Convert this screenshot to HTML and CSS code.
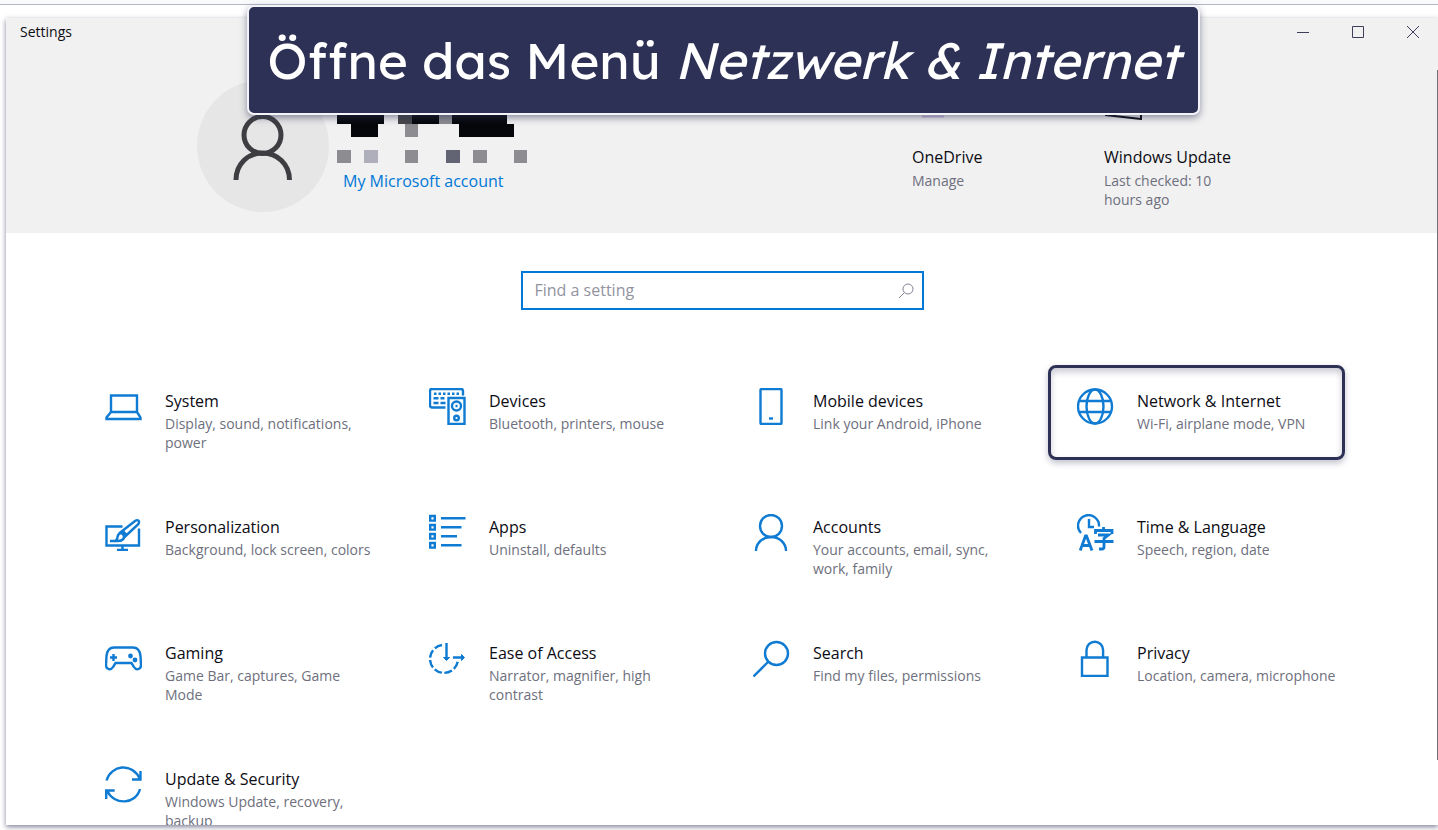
FILE: index.html
```html
<!DOCTYPE html>
<html lang="en">
<head>
<meta charset="utf-8">
<title>Settings</title>
<link rel="stylesheet" href="styles.css">
</head>
<body>
<div class="page">
  <h1 class="banner" lang="de">Öffne das Menü <em>Netzwerk &amp; Internet</em></h1>
  <main class="window">
    <header class="header">
      <div class="titlebar">
        <span class="app-name">Settings</span>
        <div class="controls">
          <button class="control" aria-label="Minimize"><svg width="14" height="14" viewBox="0 0 14 14"><path d="M1 7.500h12"/></svg></button>
          <button class="control" aria-label="Maximize"><svg width="14" height="14" viewBox="0 0 14 14"><path d="M1.500 1.500h11v11h-11z"/></svg></button>
          <button class="control" aria-label="Close"><svg width="14" height="14" viewBox="0 0 14 14"><path d="M1 1l12 12M13 1L1 13"/></svg></button>
        </div>
      </div>
      <div class="profile">
        <div class="avatar">
          <svg width="60" height="70" viewBox="0 0 60 70"><circle cx="29.500" cy="24" r="18.500"/><path d="M3 69C3 53 15 42 29.500 42s27 11 27 27"/></svg>
        </div>
        <div class="account">
          <svg class="masked-name" width="192" height="52" viewBox="0 0 192 52">
            <path fill="#06070b" d="M0 0h47v12h-6v13H14V12H0zM75 0h27v12H75zM115 0h55v12h7v13h-55V12h-7z"/>
            <path fill="#46464a" d="M61 0h14v12H61z"/>
            <path fill="#8c8c91" d="M102 0h13v12h-13zM68 12h13v13H68zM0 38h14v13H0zM68 38h13v13H68zM136 38h14v13h-14zM177 38h13v13h-13z"/>
            <path fill="#afafbb" d="M27 38h14v13H27z"/>
            <path fill="#626474" d="M109 38h14v13h-14z"/>
          </svg>
          <a class="account-link" href="#">My Microsoft account</a>
        </div>
        <div class="services">
          <div class="service">
            <svg width="40" height="36" viewBox="0 0 40 36"><path stroke="#c5bddb" stroke-width="2" d="M10 32.500h22"/></svg>
            <a class="service-name" href="#">OneDrive</a>
            <span class="service-note">Manage</span>
          </div>
          <div class="service">
            <svg width="40" height="36" viewBox="0 0 40 36"><path fill="none" stroke="#0b0b0f" stroke-width="2" d="M2 3v28l35 4V3z"/></svg>
            <a class="service-name" href="#">Windows Update</a>
            <span class="service-note">Last checked: 10 hours ago</span>
          </div>
        </div>
      </div>
    </header>

    <label class="search">
      <input class="search-input" type="text" placeholder="Find a setting" aria-label="Find a setting">
      <svg class="search-icon" width="16" height="16" viewBox="0 0 16 16"><circle cx="10" cy="6" r="5"/><path d="M6.500 9.500L1 15"/></svg>
    </label>

    <section class="tiles">
      <button class="tile">
        <svg class="icon" viewBox="0 0 37 37"><path d="M6 7.500h26v16.500H6zM6 24L1.500 29.500v1.500h34V29.500L32 24"/></svg>
        <span class="text"><span class="name">System</span><span class="note">Display, sound, notifications, power</span></span>
      </button>
      <button class="tile">
        <svg class="icon" viewBox="0 0 37 37"><path d="M16.500 19.500H3a2 2 0 0 1-2-2V3a2 2 0 0 1 2-2h29a2 2 0 0 1 2 2v4.500M19.500 10h16v26h-16z"/><circle cx="27.500" cy="18" r="4.500"/><circle cx="27.500" cy="30" r="2.300"/><path d="M5 5.700h26" stroke-dasharray="2.500 2"/><path d="M4.500 10.200h5m2 0h4M4.500 15h5m2 0h5M26.500 18h2"/></svg>
        <span class="text"><span class="name">Devices</span><span class="note">Bluetooth, printers, mouse</span></span>
      </button>
      <button class="tile">
        <svg class="icon" viewBox="0 0 37 37"><rect x="7.500" y="1" width="21" height="35" rx="1"/><path d="M16 30.500h4"/></svg>
        <span class="text"><span class="name">Mobile devices</span><span class="note">Link your Android, iPhone</span></span>
      </button>
      <button class="tile tile-marked">
        <svg class="icon" viewBox="0 0 37 37"><circle cx="18" cy="18.500" r="17"/><ellipse cx="18" cy="18.500" rx="8.500" ry="17"/><path d="M2.500 13h31M2.500 24h31"/></svg>
        <span class="text"><span class="name">Network &amp; Internet</span><span class="note">Wi-Fi, airplane mode, VPN</span></span>
      </button>
      <button class="tile">
        <svg class="icon" viewBox="0 0 37 37"><path d="M17.500 12.500H1.500v19h32.500V14.500M17.500 32v4M12 36h11"/><path d="M5 27h8c5 0 7-3 5.500-6s-5.500-2-6 2c0 2-1.500 4-3 4M14 19.500L30 7c3-2 5 0 3.500 3L19 23.500M17.500 16.500l4 4.500"/></svg>
        <span class="text"><span class="name">Personalization</span><span class="note">Background, lock screen, colors</span></span>
      </button>
      <button class="tile">
        <svg class="icon" viewBox="0 0 37 37"><path d="M1.200 2h4.600v4.600H1.200zM1.200 11h4.600v4.600H1.200zM1.200 20h4.600v4.600H1.200zM1.200 29h4.600v4.600H1.200zM12 4.300h24.500M12 13.300h20.500M12 22.300h16M12 31.300h20.500"/></svg>
        <span class="text"><span class="name">Apps</span><span class="note">Uninstall, defaults</span></span>
      </button>
      <button class="tile">
        <svg class="icon" viewBox="0 0 37 37"><circle cx="18" cy="12" r="11"/><path d="M3 37c0-8 6.500-14 15-14s15 6 15 14"/></svg>
        <span class="text"><span class="name">Accounts</span><span class="note">Your accounts, email, sync, work, family</span></span>
      </button>
      <button class="tile">
        <svg class="icon" viewBox="0 0 37 37"><path d="M4 19A10.500 10.500 0 1 1 22 12.500M12 5v8h5"/><path stroke-width="2.800" d="M3.200 36.500L8.500 22h1L15 36.500M5.200 31.500h8M26.500 13v3.500M18.500 20v-3.500h16.500V20M21 21h10.500l-4.500 3.500V33q0 2-2 2h-3M17.500 27.500h19"/></svg>
        <span class="text"><span class="name">Time &amp; Language</span><span class="note">Speech, region, date</span></span>
      </button>
      <button class="tile">
        <svg class="icon" viewBox="0 0 37 37"><path d="M9 7.500h19c5 0 7 4 7.500 8.500l.5 9c0 5-5 5.500-7 2l-2.500-4h-16L8 27c-2 3.500-7 3-7-2l.500-9C2 11.500 4 7.500 9 7.500zM8.500 14v7M5 17.500h7"/><circle class="solid" cx="25.500" cy="16" r="1.200"/><circle class="solid" cx="30" cy="20" r="1.200"/></svg>
        <span class="text"><span class="name">Gaming</span><span class="note">Game Bar, captures, Game Mode</span></span>
      </button>
      <button class="tile">
        <svg class="icon" viewBox="0 0 37 37"><path d="M13 5A14 14 0 1 0 29 20" stroke-dasharray="8 2.500"/><path d="M17.500 3v15M24 17.500h10"/><path class="solid" d="M14.500 17.500L17.500 20.500l3-3zM32.500 14.500l3 3-3 3z" stroke-width="1"/></svg>
        <span class="text"><span class="name">Ease of Access</span><span class="note">Narrator, magnifier, high contrast</span></span>
      </button>
      <button class="tile">
        <svg class="icon" viewBox="0 0 37 37"><circle cx="23.500" cy="13.500" r="11.500"/><path d="M15 22L.5 36.500"/></svg>
        <span class="text"><span class="name">Search</span><span class="note">Find my files, permissions</span></span>
      </button>
      <button class="tile">
        <svg class="icon" viewBox="0 0 37 37"><path d="M5 17.500h25.500V36H5zM9.500 17V10a8.300 8.300 0 0 1 16.600 0V17"/></svg>
        <span class="text"><span class="name">Privacy</span><span class="note">Location, camera, microphone</span></span>
      </button>
      <button class="tile">
        <svg class="icon" viewBox="0 0 37 37"><path d="M1.500 14.500C6-1 27-4 35 13M35.500 5v8.500h-8.500M35 23C31 38.500 9 40 2 24.500M1.200 33v-8.500h8.500"/></svg>
        <span class="text"><span class="name">Update &amp; Security</span><span class="note">Windows Update, recovery, backup</span></span>
      </button>
    </section>
    <div class="scrollbar"></div>
  </main>
</div>
</body>
</html>
```
FILE: styles.css
```css
*, *::before { box-sizing: border-box; }

body {
  margin: 0;
  background: #fff;
  color: #0c0c14;
  font-family: "Segoe UI", "Open Sans", "Noto Sans", sans-serif;
  font-size: 16px;
}

.page {
  position: relative;
  height: 100vh;
  padding: 18px 0 5px 6px;
  background: linear-gradient(#f8fafb 4px, #b4b6c4 4px, #b4b6c4 5px, #fff 5px);
  overflow: hidden;
}

button {
  padding: 0;
  border: 0;
  background: none;
  color: inherit;
  font: inherit;
  text-align: left;
}

a { color: inherit; text-decoration: none; }

.banner {
  position: absolute;
  z-index: 2;
  top: 5px;
  left: 247px;
  right: 238px;
  display: flex;
  align-items: center;
  justify-content: center;
  height: 110px;
  margin: 0;
  border: 2px solid #f4f3fa;
  border-radius: 7px;
  background: #2e3156;
  box-shadow: 0 3px 7px rgba(46, 49, 86, 0.5);
  color: #fff;
  font: 400 51px/1 Lexend, Inter, sans-serif;
  white-space: pre;
}

.window {
  position: relative;
  height: 100%;
  overflow: hidden;
  background: #fff;
  box-shadow: 0 2px 5px rgba(46, 49, 86, 0.6);
}

.header { background: #f1f1f1; }

.titlebar {
  display: flex;
  justify-content: space-between;
  height: 28px;
  padding-left: 14px;
}

.app-name { font-size: 14px; line-height: 28px; }

.controls { display: flex; }

.control {
  display: grid;
  place-items: center;
  width: 55px;
  height: 28px;
  padding-left: 5px;
}

.control svg { fill: none; stroke: #3d3f58; stroke-width: 1; }

.profile {
  display: flex;
  padding: 34px 0 21px 191px;
}

.avatar {
  display: grid;
  place-items: center;
  width: 132px;
  height: 132px;
  border-radius: 50%;
  background: #e6e6e6;
}

.avatar svg { fill: none; stroke: #3e3e42; stroke-width: 5; }

.account {
  display: flex;
  flex-direction: column;
  padding: 32px 0 0 8px;
}

.account-link {
  padding-left: 6px;
  color: #0078d7;
  line-height: 34px;
}

.services {
  display: flex;
  margin-left: auto;
}

.service {
  display: flex;
  flex-direction: column;
  width: 192px;
  padding-top: 4px;
}

.service:last-child { width: 334px; }

.service-name { margin-top: 26px; line-height: 22px; }

.service-note {
  width: 124px;
  padding-top: 3px;
  color: #6e6f7d;
  font-size: 14px;
  line-height: 19px;
}

.search {
  position: relative;
  display: block;
  width: 403px;
  margin: 38px auto 0;
}

.search-input {
  display: block;
  width: 100%;
  height: 39px;
  padding: 0 40px 2px 12px;
  border: 2px solid #0078d7;
  border-radius: 0;
  outline: 0;
  background: #fff;
  font: inherit;
}

.search-input::placeholder { color: #93939f; opacity: 1; }

.search-icon {
  position: absolute;
  top: 12px;
  right: 10px;
  fill: none;
  stroke: #85859a;
}

.tiles {
  display: grid;
  grid-template-columns: repeat(4, 1fr);
  grid-auto-rows: 126px;
  padding: 78px 37px 0 99px;
}

.tile {
  position: relative;
  display: flex;
  align-items: flex-start;
  gap: 23px;
}

.tile-marked::before {
  content: "";
  position: absolute;
  top: -23px;
  left: -29px;
  right: 56px;
  height: 95px;
  border: 3px solid #2e3156;
  border-radius: 8px;
  box-shadow: 0 3px 6px rgba(46, 49, 86, 0.3), inset 0 4px 6px rgba(46, 49, 86, 0.25);
}

.icon {
  flex: none;
  width: 37px;
  height: 37px;
  fill: none;
  stroke: #0f7bd2;
  stroke-width: 2.4;
}

.icon .solid { fill: #0f7bd2; }

.text { display: flex; flex-direction: column; }

.name { line-height: 26px; }

.note {
  max-width: 206px;
  color: #6e6f7d;
  font-size: 14px;
  line-height: 19px;
}

.scrollbar {
  position: absolute;
  top: 52px;
  right: 0;
  width: 1px;
  height: 690px;
  background: #6f6f74;
}
```
